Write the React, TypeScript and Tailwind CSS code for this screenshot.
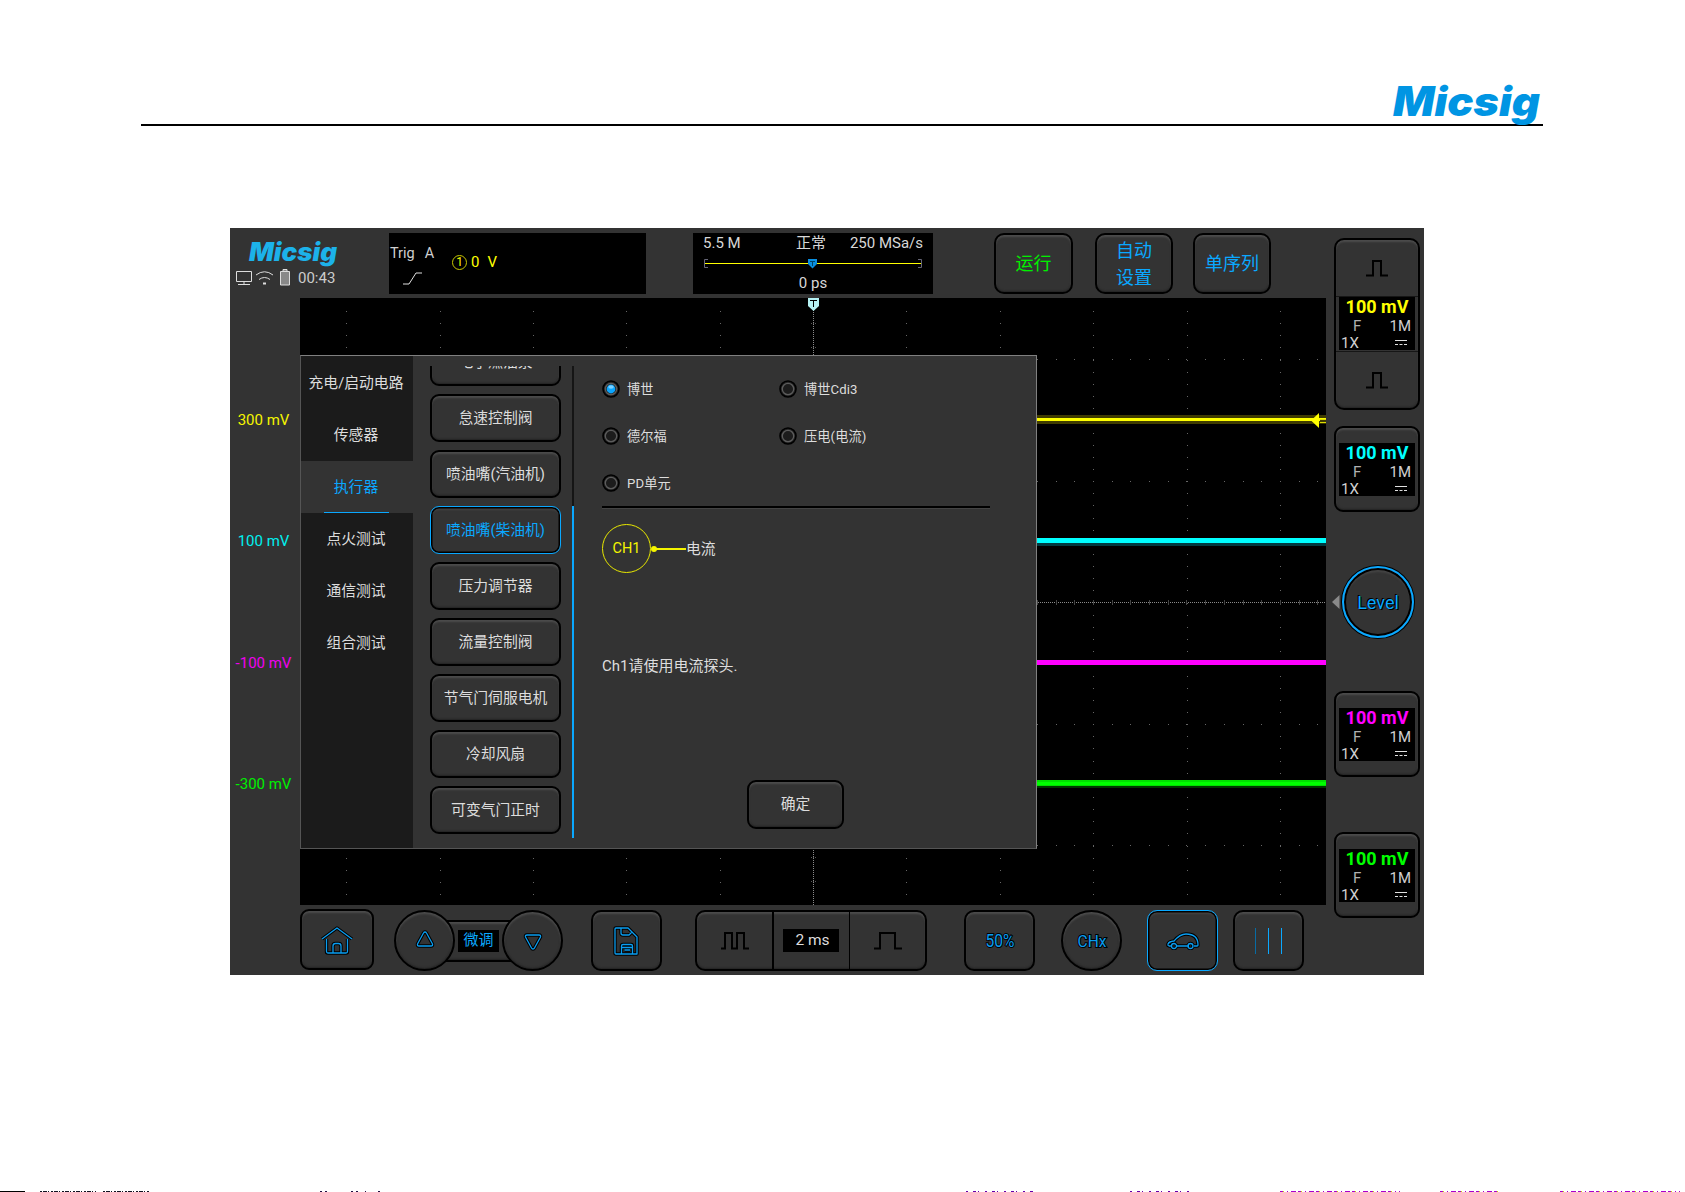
import type { ReactNode } from "react";
import clsx from "clsx";

const bevel =
  "border-2 border-black bg-[#333] shadow-[inset_0_2px_2px_#4c4c4c,inset_0_-1px_2px_#232323]";

const tabs = ["充电/启动电路", "传感器", "执行器", "点火测试", "通信测试", "组合测试"];

const tests = [
  "电子燃油泵",
  "怠速控制阀",
  "喷油嘴(汽油机)",
  "喷油嘴(柴油机)",
  "压力调节器",
  "流量控制阀",
  "节气门伺服电机",
  "冷却风扇",
  "可变气门正时",
];

const options = ["博世", "博世Cdi3", "德尔福", "压电(电流)", "PD单元"];

const offsets = [
  { label: "300 mV", color: "text-[#f5f500]" },
  { label: "100 mV", color: "text-[#00f0f0]" },
  { label: "-100 mV", color: "text-[#f000f0]" },
  { label: "-300 mV", color: "text-[#00f000]" },
];

function Logo({ width, height, color }: { width: number; height: number; color: string }) {
  return (
    <svg
      width={width}
      height={height}
      viewBox="0 0 147 39"
      preserveAspectRatio="none"
      className="block shrink-0 overflow-visible"
    >
      <text
        x="0"
        y="31.5"
        fontFamily="Inter, Liberation Sans, sans-serif"
        fontWeight="900"
        fontStyle="italic"
        fontSize="41"
        fill={color}
        textLength="147"
        lengthAdjust="spacingAndGlyphs"
      >
        Micsig
      </text>
    </svg>
  );
}

function Pulse() {
  return (
    <svg width="22" height="17" viewBox="0 0 22 17" fill="none" stroke="#000" strokeWidth="2">
      <path d="M0 15.5H7V1H15V15.5H22" />
    </svg>
  );
}

function ChannelInfo({ color }: { color: string }) {
  return (
    <div className="mx-auto h-[53px] w-[76px] bg-black text-[15px] text-[#d0d0d0]">
      <div className={clsx("h-[20px] text-center text-[18px] leading-[19px] font-bold", color)}>100 mV</div>
      <div className="flex h-[19px] items-center justify-between pr-[4px] pl-[14px]">
        <span className="text-[#b0b0b0]">F</span>
        <span>1M</span>
      </div>
      <div className="flex h-[14px] items-center justify-between pr-[8px] pl-[2px] leading-[14px]">
        <span>1X</span>
        <svg width="12" height="6" viewBox="0 0 12 6" stroke="#e0e0e0">
          <path d="M0 .5H12M0 4.5H3M4.5 4.5H7.5M9 4.5H12" />
        </svg>
      </div>
    </div>
  );
}

function ChannelButton({ color, className }: { color: string; className?: string }) {
  return (
    <div className={clsx(bevel, "h-[86px] w-[86px] rounded-[9px] pt-[15px]", className)}>
      <ChannelInfo color={color} />
    </div>
  );
}

const columns = [46, 140, 233, 326, 420, 606, 700, 793, 887, 980];
const rows = [61, 183, 426, 547];

function Graticule() {
  return (
    <svg width="1026" height="607" viewBox="0 0 1026 607" className="block" shapeRendering="crispEdges">
      {columns.map((x) => (
        <line key={x} x1={x + 0.5} x2={x + 0.5} y1="13" y2="600" stroke="#666" strokeDasharray="1 11.15" />
      ))}
      {rows.map((y) => (
        <line key={y} x1="9" x2="1020" y1={y + 0.5} y2={y + 0.5} stroke="#666" strokeDasharray="1 17.67" />
      ))}
      <line x1="513.5" x2="513.5" y1="0" y2="607" stroke="#8a8a8a" strokeDasharray="1 1" />
      {[25.5, 49.5, 559.5, 583.5].map((y) => (
        <line key={y} x1="511" x2="516" y1={y} y2={y} stroke="#555" strokeDasharray="1 1" />
      ))}
      <line x1="0" x2="1026" y1="304.5" y2="304.5" stroke="#8a8a8a" strokeDasharray="1 1" />
      <line x1="9" x2="1026" y1="304.5" y2="304.5" stroke="#444" strokeWidth="5" strokeDasharray="1 17.67" />

      <rect y="117" width="1026" height="9" fill="#403c00" />
      <rect y="120" width="1026" height="3" fill="#ff0" />
      <rect y="240" width="1026" height="5" fill="#0ff" />
      <rect y="245" width="1026" height="3" fill="#003a40" />
      <rect y="362" width="1026" height="5" fill="#f0f" />
      <rect y="482" width="1026" height="6" fill="#00e000" />
      <rect y="484" width="1026" height="3" fill="#0f0" />
      <rect y="488" width="1026" height="2" fill="#003800" />
      {/* trigger level marker */}
      <path d="M1011 122.5L1019 115V130Z" fill="#ff0" shapeRendering="auto" />
      <path d="M1020 119.500H1026M1020 122.500H1026" stroke="#403c00" />
      <path d="M1020 121.500H1026M1020 124.500H1026" stroke="#dd0" />
      {/* trigger position marker */}
      <path d="M508 0H519V8L513.5 13L508 8Z" fill="#b6f2f4" shapeRendering="auto" />
      <path d="M510 2.5H517M513.5 2V9" stroke="#000" />
    </svg>
  );
}

function Radio({ label, checked }: { label: string; checked: boolean }) {
  return (
    <div className="flex w-[177px] items-center gap-[7px] text-[13.2px] tracking-[0.1px]">
      <svg width="18" height="18" viewBox="0 0 18 18" fill="none">
        <circle cx="9" cy="9" r="8" fill="#242424" stroke="#000" strokeWidth="1.6" />
        <circle cx="9" cy="9" r="5.7" fill="#1c1c1c" stroke="#5c5c5c" strokeWidth="1.3" />
        {checked && <circle cx="9" cy="9" r="4.4" fill="#0aa6ff" />}
        {checked && <ellipse cx="9" cy="7" rx="2.8" ry="1.8" fill="#7bd0ff" />}
      </svg>
      <span className="pt-[2px]">{label}</span>
    </div>
  );
}

function TestDialog() {
  return (
    <div className="absolute top-[57px] left-0 flex h-[494px] w-[737px] border border-t-[#808080] border-r-[#808080] border-b-[#555] border-l-[#555] bg-[#333] text-[14.8px] text-[#ddd]">
      <div className="w-[112px] shrink-0 bg-[#1b1b1b] pt-px">
        {tabs.map((tab) => (
          <div
            key={tab}
            className={clsx(
              "flex h-[52px] flex-col items-center justify-center pr-[2px]",
              tab === "执行器" && "bg-[#333] text-[#0aa8ff]"
            )}
          >
            <span className="flex grow items-center pt-[2px] whitespace-nowrap">{tab}</span>
            <span className={clsx("h-px w-[65px]", tab === "执行器" && "bg-[#0aa8ff]")} />
          </div>
        ))}
      </div>

      <div className="mt-[10px] ml-[17px] flex h-[472px] w-[131px] shrink-0 flex-col justify-end gap-2 overflow-hidden pb-1">
        {tests.map((name) => {
          const selected = name === "喷油嘴(柴油机)";
          return (
            <button
              key={name}
              className={clsx(
                "h-12 w-full shrink-0 rounded-[9px] whitespace-nowrap",
                selected
                  ? "border border-[#0aa8ff] bg-[#333] text-[#0aa8ff] shadow-[inset_0_0_0_1.5px_#000,inset_0_3px_2px_#444]"
                  : bevel
              )}
            >
              {name}
            </button>
          );
        })}
      </div>
      <div className="mt-[10px] ml-[11px] h-[472px] w-[2px] shrink-0 bg-[#151515] pt-[140px]">
        <div className="h-full bg-[#0aa8ff]" />
      </div>

      <div className="ml-[28px] flex w-[388px] flex-col">
        <div className="mt-[9px] flex h-[141px] flex-wrap">
          {options.map((label, i) => (
            <Radio key={label} label={label} checked={i === 0} />
          ))}
        </div>
        <div className="h-[3px] border-b border-[#444] bg-black" />
        <div className="mt-[15px] flex items-center">
          <div className="flex h-[49px] w-[49px] items-center justify-center rounded-full border border-[#e8e800] pt-px text-[14.5px] text-[#f5f500]">
            CH1
          </div>
          <svg width="35" height="8" viewBox="0 0 35 8" fill="#f5f500">
            <circle cx="3" cy="4" r="3" />
            <rect x="3" y="3" width="32" height="2" />
          </svg>
          <span className="pt-px">电流</span>
        </div>
        <p className="mt-[81px] text-[15px] leading-6">Ch1请使用电流探头.</p>
        <button className={clsx(bevel, "mt-[102px] ml-[145px] h-[49px] w-[97px] rounded-[9px]")}>确定</button>
      </div>
    </div>
  );
}

function StatusBar() {
  return (
    <div className="flex h-[70px] items-start pt-[5px]">
      <div className="ml-[6px] w-[153px]">
        <div className="ml-[13px] pt-[9px]">
          <Logo width={88} height={24} color="#1cb2ea" />
        </div>
        <div className="mt-[2px] flex h-[20px] items-center text-[15px] text-[#ccc]">
          <svg width="55" height="18" viewBox="0 0 55 18" fill="none" stroke="#ddd">
            <path d="M.5 2.500H15.500V12.500H.5ZM8 12.500V15M2 15.500H14" />
            <path d="M20 6Q28.500 -.5 37 6M23 10.500Q28.500 6.500 34 10.500" />
            <path d="M27 14.500H30" strokeWidth="2" />
            <path d="M44.500 2.500H53.500V16H44.500ZM47 2V.5H51V2" fill="#888" />
          </svg>
          <span className="ml-[7px]">00:43</span>
        </div>
      </div>

      <div className="flex h-[61px] w-[257px] bg-black">
        <div className="ml-px w-[62px] pt-[12px] text-[#d0d0d0]">
          <div className="flex gap-[10px] text-[14.5px] leading-[18px]">
            <span>Trig</span>
            <span>A</span>
          </div>
          <svg width="20" height="13" viewBox="0 0 20 13" fill="none" stroke="#e0e0e0" className="mt-[9px] ml-[13px]">
            <path d="M0 12H6L13 1H19" />
          </svg>
        </div>
        <div className="flex h-[58px] items-center text-[15px] text-[#ff0]">
          <span className="flex h-[15px] w-[15px] items-center justify-center rounded-full border border-[#c8c800] text-[12px]">
            1
          </span>
          <span className="ml-[4px]">0</span>
          <span className="ml-[8px]">V</span>
        </div>
      </div>

      <div className="ml-[47px] flex h-[61px] w-[240px] flex-col items-center bg-black px-[10px] text-[15px] text-[#d8d8d8]">
        <div className="flex h-[21px] w-full items-center justify-between">
          <span className="w-[70px]">5.5 M</span>
          <span>正常</span>
          <span className="w-[74px] text-right whitespace-nowrap">250 MSa/s</span>
        </div>
        <svg width="219" height="12" viewBox="0 0 219 12" fill="none" className="mt-[3px] ml-px">
          <path d="M.5 6.500H218" stroke="#ff0" />
          <path d="M4 2.500H.5V10.500H4M214 2.500H217.500V10.500H214" stroke="#667" />
          <path d="M104 2H113V7L108.500 11.500L104 7Z" fill="#0a8fe0" />
          <path d="M106 4.500H111M108.500 4.500V9" stroke="#046" />
        </svg>
        <span className="mt-[3px] leading-[22px]">0 ps</span>
      </div>

      <button className={clsx(bevel, "ml-[61px] h-[61px] w-[79px] rounded-[10px] text-[18px] text-[#00f000]")}>
        运行
      </button>
      <button className={clsx(bevel, "ml-[22px] h-[61px] w-[78px] rounded-[10px] text-[18px] leading-[27px] text-[#0aa8ff]")}>
        自动
        <br />
        设置
      </button>
      <button className={clsx(bevel, "ml-[20px] h-[61px] w-[78px] rounded-[10px] text-[18px] text-[#0aa8ff]")}>
        单序列
      </button>
    </div>
  );
}

function ToolButton({ children, className }: { children: ReactNode; className?: string }) {
  return (
    <button className={clsx(bevel, "flex h-[61px] items-center justify-center", className)}>{children}</button>
  );
}

// Blue line drawing on top of a wider black copy
function Outlined({ d, width, height }: { d: string; width: number; height: number }) {
  return (
    <svg width={width} height={height} viewBox={`0 0 ${width} ${height}`} fill="none" strokeLinejoin="round">
      <path d={d} stroke="#000" strokeWidth="3.4" />
      <path d={d} stroke="#0a9df0" strokeWidth="1.3" />
    </svg>
  );
}

function OutlinedText({ text, size, length }: { text: string; size: number; length: number }) {
  return (
    <svg width="32" height="20" viewBox="0 0 32 20">
      <text
        x="1.5"
        y="16"
        fontFamily="Roboto, sans-serif"
        fontSize={size}
        textLength={length}
        lengthAdjust="spacingAndGlyphs"
        fill="#0a9df0"
        stroke="#000"
        strokeWidth="2"
        paintOrder="stroke"
      >
        {text}
      </text>
    </svg>
  );
}

function Toolbar() {
  return (
    <div className="flex h-[70px] items-start pt-[5px] pl-[70px]">
      <ToolButton className="-mt-px w-[74px] rounded-[9px]">
        <Outlined
          width={34}
          height={30}
          d="M2 14L17 3L32 14M6.5 14V26.5Q6.5 28 8 28H26Q27.5 28 27.5 26.5V14M13 28V21Q13 18.5 15.500 18.500H18.500Q21 18.500 21 21V28"
        />
      </ToolButton>

      <div className="ml-[20px] flex items-center">
        <ToolButton className="z-10 w-[61px] rounded-full">
          <div className="pb-[3px]">
            <Outlined width={20} height={18} d="M10 2Q11 2 11.5 3L17.5 14Q18 16 16 16H4Q2 16 2.5 14L8.5 3Q9 2 10 2Z" />
          </div>
        </ToolButton>
        <div className={clsx(bevel, "-mx-[14px] flex h-[42px] w-[75px] items-center justify-center")}>
          <span className="flex h-[22px] w-[41px] items-center justify-center bg-black text-[15px] text-[#0aa8ff]">
            微调
          </span>
        </div>
        <ToolButton className="z-10 w-[61px] rounded-full">
          <div className="pt-[3px]">
            <Outlined width={20} height={18} d="M10 16Q11 16 11.5 15L17.5 4Q18 2 16 2H4Q2 2 2.5 4L8.500 15Q9 16 10 16Z" />
          </div>
        </ToolButton>
      </div>

      <ToolButton className="ml-[28px] w-[71px] rounded-[10px]">
        <Outlined
          width={27}
          height={30}
          d="M3 2H15L24 11V28H3Q2 28 2 27V3Q2 2 3 2ZM8 2V7Q8 9 10 9H16L19 6M8.500 28V20Q8.500 18.500 10 18.500H18Q19.500 18.500 19.500 20V28M8.500 21.500H19.500M11.500 24H17"
        />
      </ToolButton>

      <div className={clsx(bevel, "ml-[33px] flex h-[61px] w-[232px] items-stretch rounded-[10px]")}>
        <div className="flex w-[77px] items-center justify-center border-r-2 border-black">
          <svg width="28" height="18" viewBox="0 0 28 18" fill="none" stroke="#000" strokeWidth="2">
            <path d="M0 16.5H4V1H11V16.5H16V1H23V16.5H28" />
          </svg>
        </div>
        <div className="flex w-[76px] items-center justify-center border-r border-black pr-px">
          <span className="flex h-[23px] w-[56px] items-center justify-center bg-black pl-[3px] text-[15.5px] text-[#ddd]">
            2 ms
          </span>
        </div>
        <div className="flex flex-1 items-center justify-center">
          <svg width="28" height="18" viewBox="0 0 28 18" fill="none" stroke="#000" strokeWidth="2">
            <path d="M0 16.5H6V1H21V16.5H28" />
          </svg>
        </div>
      </div>

      <ToolButton className="ml-[37px] w-[71px] rounded-[10px]">
        <OutlinedText text="50%" size={18.5} length={29} />
      </ToolButton>
      <ToolButton className="ml-[26px] w-[61px] rounded-full">
        <OutlinedText text="CHx" size={16.5} length={29} />
      </ToolButton>
      <button className="ml-[25px] flex h-[61px] w-[71px] items-center justify-center rounded-[10px] border border-[#0aa8ff] bg-[#333] shadow-[inset_0_0_0_1.5px_#000,inset_0_3px_2px_#444]">
        <Outlined
          width={34}
          height={18}
          d="M5 14H3Q1.5 13.5 2 12Q3 9.5 8 9Q14 2 20 2Q32 2 32 13Q32 14 31 14H28M11 14H23M5.500 14A2.500 2.500 0 1 0 10.500 14A2.500 2.500 0 1 0 5.500 14M22 14A2.500 2.500 0 1 0 27 14A2.500 2.500 0 1 0 22 14"
        />
      </button>
      <ToolButton className="ml-[15px] w-[71px] rounded-[10px]">
        <div className="flex h-[26px] gap-[12px]">
          <span className="w-px bg-[#086ca4]" />
          <span className="w-px bg-[#0aa8ff]" />
          <span className="w-px bg-[#0aa8ff]" />
        </div>
      </ToolButton>
    </div>
  );
}

function ChannelColumn() {
  return (
    <div className="w-[97px] shrink-0 pt-[10px] pl-[7px]">
      <div className={clsx(bevel, "flex h-[172px] w-[86px] flex-col rounded-[10px]")}>
        <div className="flex h-[57px] items-center justify-center border-b border-[#161616]">
          <Pulse />
        </div>
        <div className="h-[54px]">
          <ChannelInfo color="text-[#ff0]" />
        </div>
        <div className="flex flex-1 items-center justify-center border-t border-[#161616]">
          <Pulse />
        </div>
      </div>
      <ChannelButton className="mt-[16px]" color="text-[#0ff]" />
      <div className="mt-[54px] flex items-center">
        <svg width="8" height="14" viewBox="0 0 8 14" className="-ml-[2px]">
          <path d="M7.5 0V14L0 7Z" fill="#8a8a8a" />
        </svg>
        <div className="ml-[2px] flex h-[72px] w-[72px] items-center justify-center rounded-full border-2 border-[#0aa8ff] bg-[#333] text-[18px] text-[#0aa8ff] shadow-[0_0_0_1px_#000,inset_0_0_0_2px_#000,inset_0_4px_2px_#444] [text-shadow:0_0_1px_#000,1px_1px_0_#000,-1px_-1px_0_#000]">
          Level
        </div>
      </div>
      <ChannelButton className="mt-[53px]" color="text-[#f0f]" />
      <ChannelButton className="mt-[55px]" color="text-[#0f0]" />
    </div>
  );
}

export default function App() {
  return (
    <div className="flex h-[1192px] w-[1685px] flex-col overflow-hidden bg-white font-[Roboto,'Noto_Sans_CJK_SC',sans-serif]">
      <header className="mx-[141px] flex h-[126px] w-[1402px] items-end justify-end border-b-2 border-black pr-[3px] pb-[1px]">
        <Logo width={147} height={39} color="#0095e3" />
      </header>

      <main className="mt-[102px] ml-[230px] flex h-[747px] w-[1194px] bg-[#333]">
        <div className="w-[1097px] shrink-0">
          <StatusBar />
          <div className="flex h-[607px]">
            <div className="w-[70px] shrink-0 pt-[61px]">
              {offsets.map(({ label, color }) => (
                <div
                  key={label}
                  className={clsx(
                    "flex h-[121.5px] items-center justify-center pr-[3px] text-[15px] whitespace-nowrap",
                    color
                  )}
                >
                  {label}
                </div>
              ))}
            </div>
            <div className="relative w-[1026px] bg-black">
              <Graticule />
              <TestDialog />
            </div>
          </div>
          <Toolbar />
        </div>
        <ChannelColumn />
      </main>

      <svg width="1685" height="1" viewBox="0 0 1685 1" className="mt-auto block" shapeRendering="crispEdges">
        <rect width="25" height="1" fill="#000" />
        <g strokeWidth="1" transform="translate(0 .5)">
          <path d="M40 0H96M103 0H150" stroke="#112" strokeDasharray="2 1 4 1 1 2" />
          <path d="M320 0H333M351 0H382" stroke="#214" strokeDasharray="2 3 2 7 1 12" />
          <path d="M966 0H1034M1130 0H1190" stroke="#60a" strokeDasharray="2 5 3 2 1 6" />
          <path d="M1280 0H1400M1440 0H1500M1560 0H1680" stroke="#a0c" strokeDasharray="3 4 1 3 5 2" />
          <path d="M1283 0H1400M1443 0H1500M1563 0H1680" stroke="#cd0" strokeDasharray="1 17" />
        </g>
      </svg>
    </div>
  );
}
